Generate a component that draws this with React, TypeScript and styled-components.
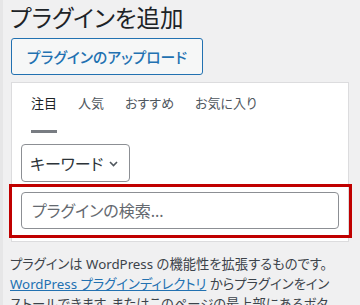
import React from "react";
import styled, { createGlobalStyle } from "styled-components";

const GlobalStyle = createGlobalStyle`
  html, body {
    margin: 0;
    padding: 0;
    background: #f0f0f1;
  }
  body {
    font-family: "Noto Sans", "Noto Sans CJK JP", sans-serif;
    font-feature-settings: "palt";
    color: #3c434a;
  }
`;

const Page = styled.div`
  box-sizing: border-box;
  width: 360px;
  min-height: 305px;
  padding: 0 11px 0 8px;
  border-left: 3px solid #e6e6e7;
`;

const Title = styled.h1`
  margin: 0 0 0 -1px;
  padding-top: 3px;
  font-size: 23.5px;
  font-weight: 400;
  line-height: 30px;
  color: #1d2327;
`;

const UploadButton = styled.button`
  display: block;
  margin-top: 5px;
  height: 37px;
  padding: 0 15px;
  background: #f6f7f7;
  border: 1px solid #2271b1;
  border-radius: 3px;
  color: #2271b1;
  font-family: inherit;
  font-feature-settings: "palt";
  font-size: 14.8px;
  font-weight: 500;
  cursor: pointer;
`;

const Panel = styled.div`
  margin-top: 7px;
  background: #fff;
  border: 1px solid #dcdcde;
  padding: 0 9px 3px;
`;

const Tabs = styled.ul`
  display: flex;
  gap: 21px;
  list-style: none;
  margin: 0;
  padding: 0 0 0 10px;
`;

const Tab = styled.li<{ $active?: boolean }>`
  padding: 10px 0 17px;
  font-size: 13px;
  line-height: 20px;
  color: ${(p) => (p.$active ? "#1d2327" : "#50575e")};
  border-bottom: 3px solid ${(p) => (p.$active ? "#787c82" : "transparent")};
`;

const SelectBox = styled.div`
  display: inline-flex;
  align-items: center;
  gap: 6px;
  margin-top: 11px;
  height: 38px;
  box-sizing: border-box;
  padding: 0 11px 0 8px;
  border: 1px solid #8c8f94;
  border-radius: 4px;
  font-size: 16px;
  color: #2c3338;
  svg {
    margin-top: 2px;
  }
`;

const Highlight = styled.div`
  margin: 2px -13px 0 -12px;
  padding: 5px 10px 6px 9px;
  border: 3px solid #c00000;
`;

const SearchInput = styled.input`
  display: block;
  width: 100%;
  height: 37px;
  box-sizing: border-box;
  padding: 0 10px;
  border: 1px solid #8c8f94;
  border-radius: 4px;
  font-family: inherit;
  font-feature-settings: "palt";
  font-size: 16px;
  color: #2c3338;
  &::placeholder {
    color: #646970;
  }
`;

const Description = styled.p`
  margin: 12px 0 0 -1px;
  padding-right: 19px;
  font-size: 13.3px;
  line-height: 20px;
  color: #3c434a;
  a {
    color: #2271b1;
    text-decoration: underline;
  }
`;

const Chevron = () => (
  <svg width="9" height="6" viewBox="0 0 9 6" fill="none">
    <path d="M1 1l3.5 3.5L8 1" stroke="#50575e" strokeWidth="1.6" />
  </svg>
);

const tabs = ["注目", "人気", "おすすめ", "お気に入り"];

export default function App() {
  return (
    <>
      <GlobalStyle />
      <Page>
        <Title>プラグインを追加</Title>
        <UploadButton>プラグインのアップロード</UploadButton>
        <Panel>
          <Tabs>
            {tabs.map((t, i) => (
              <Tab key={t} $active={i === 0}>
                {t}
              </Tab>
            ))}
          </Tabs>
          <SelectBox>
            キーワード
            <Chevron />
          </SelectBox>
          <Highlight>
            <SearchInput placeholder="プラグインの検索..." />
          </Highlight>
        </Panel>
        <Description>
          プラグインは WordPress の機能性を拡張するものです。
          <a href="#">WordPress プラグインディレクトリ</a>{" "}
          からプラグインをインストールできます。またはこのページの最上部にあるボタンを使って
          Zip 形式のプラグインをアップロードすることもできます。
        </Description>
      </Page>
    </>
  );
}
